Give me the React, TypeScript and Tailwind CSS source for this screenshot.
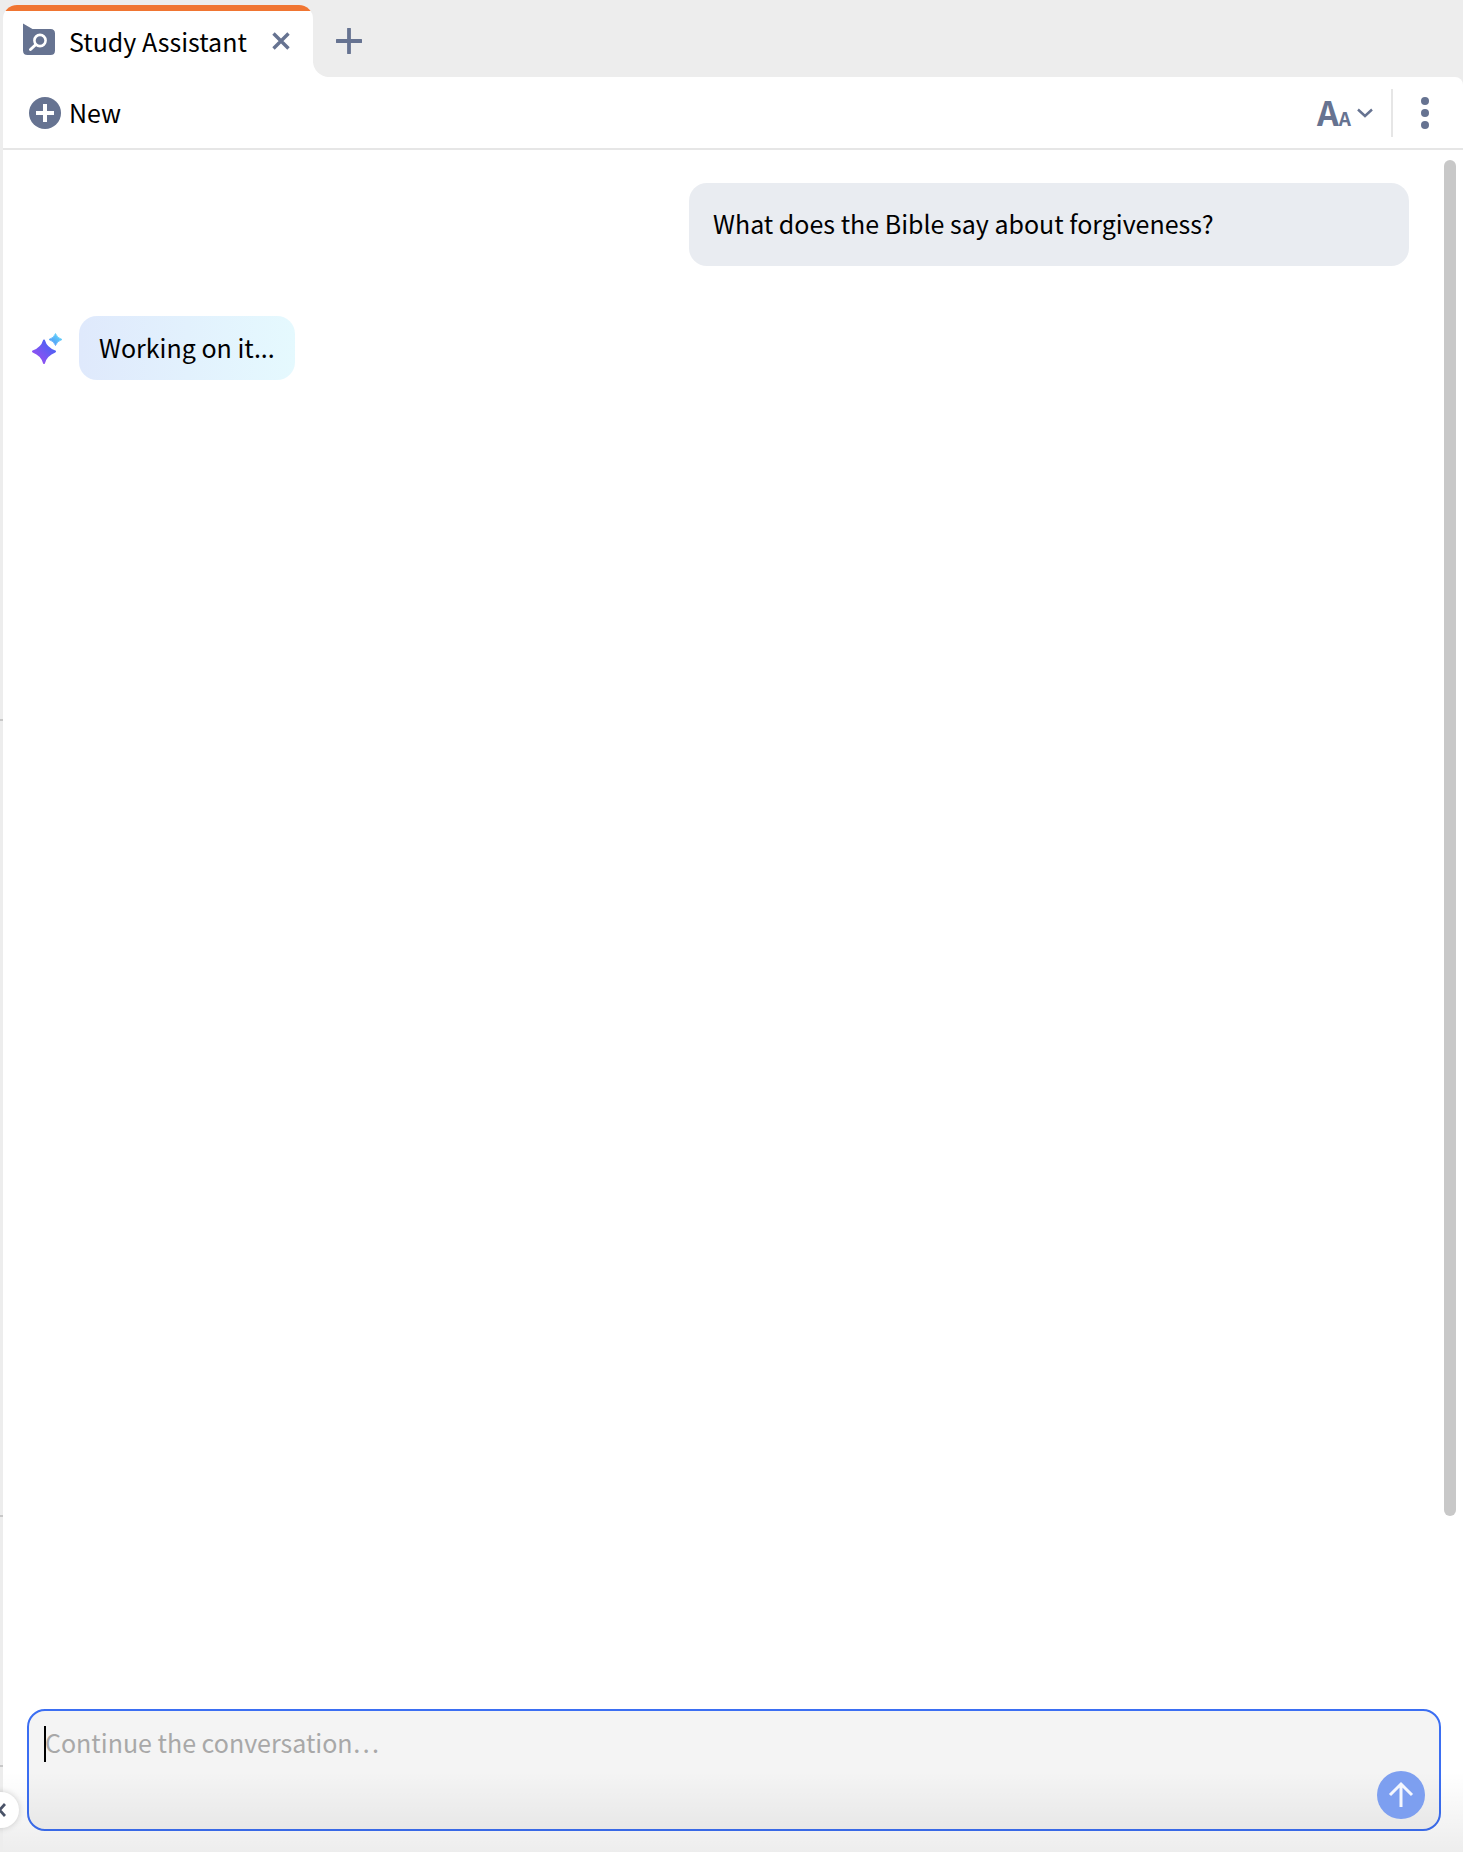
import React from "react";

const slate = "#667391";

function TabIcon() {
  return (
    <svg width="33" height="33" viewBox="0 0 33 33" className="mb-[3px] shrink-0">
      <path d="M0 0.5 L9.5 6 H27.5 Q32 6 32 10.5 V27.5 Q32 32 27.5 32 H4.5 Q0 32 0 27.5 Z" fill={slate} />
      <circle cx="17" cy="17.5" r="5.6" fill="none" stroke="#fff" strokeWidth="2.6" />
      <path d="M12.3 22 L7.5 26.5" stroke="#fff" strokeWidth="3" strokeLinecap="round" />
    </svg>
  );
}

function Sparkle() {
  return (
    <svg width="31" height="31" viewBox="0 0 31 31" className="shrink-0">
      <defs>
        <linearGradient id="big" x1="0" y1="1" x2="1" y2="0">
          <stop offset="0" stopColor="#a44cf0" />
          <stop offset="1" stopColor="#3a66f5" />
        </linearGradient>
        <linearGradient id="small" x1="0" y1="1" x2="1" y2="0">
          <stop offset="0" stopColor="#4f8ef7" />
          <stop offset="1" stopColor="#63e0fb" />
        </linearGradient>
      </defs>
      <path d="M12 7.5 Q14 15 23 18.5 Q14 22 12 30 Q10 22 1 18.5 Q10 15 12 7.5 Z" fill="url(#big)" stroke="url(#big)" strokeWidth="2" strokeLinejoin="round" />
      <path d="M23.5 0.5 Q24.8 4.8 30 6.5 Q24.8 8.2 23.5 12.5 Q22.2 8.2 17 6.5 Q22.2 4.8 23.5 0.5 Z" fill="url(#small)" stroke="url(#small)" strokeWidth="0.8" strokeLinejoin="round" />
    </svg>
  );
}

export default function App() {
  return (
    <div
      className="relative flex h-[1852px] w-[1463px] flex-col overflow-hidden bg-[#ededed] pl-[3px] text-black"
      style={{ fontFamily: '"Noto Sans CJK SC", "Noto Sans", sans-serif' }}
    >
      {/* Tab strip */}
      <div className="flex h-[77px] shrink-0 pt-[5px]">
        <div className="relative flex w-[310px] items-center overflow-hidden rounded-t-[14px] bg-white pl-[20px]">
          <div className="absolute inset-x-0 top-0 h-[6px] bg-[#f07532]" />
          <TabIcon />
          <span className="ml-[13px] mt-[1px] text-[25px] leading-none">Study Assistant</span>
          <svg width="20" height="20" viewBox="0 0 20 20" className="ml-[24px]">
            <path d="M2.5 2.5 L17.5 17.5 M17.5 2.5 L2.5 17.5" stroke={slate} strokeWidth="3.4" />
          </svg>
        </div>
        <div className="relative flex flex-1 items-center">
          <div className="absolute bottom-0 left-0 h-[14px] w-[14px] bg-white" />
          <div className="absolute inset-0 rounded-bl-[16px] bg-[#ededed]" />
          <svg width="26" height="26" viewBox="0 0 26 26" className="relative ml-[23px]">
            <path d="M13 1 V25 M1 13 H25" stroke={slate} strokeWidth="3.8" strokeLinecap="round" />
          </svg>
        </div>
      </div>

      {/* Panel */}
      <div className="relative flex min-h-0 flex-1 flex-col rounded-tr-[8px] bg-white">
        {/* Toolbar */}
        <div className="flex h-[73px] shrink-0 items-center border-b-2 border-[#e6e6e6] pl-[26px]">
          <svg width="32" height="32" viewBox="0 0 32 32">
            <circle cx="16" cy="16" r="16" fill={slate} />
            <path d="M16 7 V25 M7 16 H25" stroke="#fff" strokeWidth="4" />
          </svg>
          <span className="ml-[8px] text-[25px] leading-none">New</span>
          <div className="ml-auto flex items-center">
            <span className="mb-[2px] flex items-baseline font-bold leading-none text-[#667391]">
              <span className="text-[34px]">A</span>
              <span className="text-[19px]">A</span>
            </span>
            <svg width="16" height="10" viewBox="0 0 16 10" className="ml-[6px]">
              <path d="M1 1.5 L8 8 L15 1.5" fill="none" stroke={slate} strokeWidth="2.4" />
            </svg>
            <div className="ml-[18px] h-[48px] w-[2px] bg-[#e6e6e6]" />
            <div className="ml-[28px] mr-[34px] flex flex-col gap-[4px]">
              <div className="h-[8px] w-[8px] rounded-full bg-[#667391]" />
              <div className="h-[8px] w-[8px] rounded-full bg-[#667391]" />
              <div className="h-[8px] w-[8px] rounded-full bg-[#667391]" />
            </div>
          </div>
        </div>

        {/* Conversation */}
        <div className="relative flex min-h-0 flex-1 flex-col">
          <div className="absolute right-[7px] top-[10px] h-[1356px] w-[12px] rounded-full bg-[#c8c8c8]" />
          <div className="flex justify-end pr-[54px] pt-[33px]">
            <div className="flex h-[83px] w-[720px] items-center rounded-[18px] bg-[#e9ecf1] pb-[2px] pl-[24px] text-[25px] leading-none">
              What does the Bible say about forgiveness?
            </div>
          </div>
          <div className="mt-[50px] flex items-center pl-[29px]">
            <Sparkle />
            <div className="ml-[16px] flex h-[64px] w-[216px] items-center rounded-[18px] bg-gradient-to-r from-[#dfe9fc] to-[#e5f9fe] pb-[2px] pl-[20px] text-[25px] leading-none">
              Working on it...
            </div>
          </div>
        </div>

        {/* Composer */}
        <div className="relative mb-[21px] ml-[24px] mr-[22px] h-[122px] shrink-0 rounded-[18px] border-2 border-[#3b6ef2] bg-[#f4f4f4]">
          <div className="absolute left-[15px] top-[15px] h-[36px] w-[2px] bg-black" />
          <div className="pl-[16px] pt-[13px] text-[25px] leading-[36px] text-[#a8a8a8]">Continue the conversation…</div>
          <div className="absolute bottom-[10px] right-[14px] z-10 flex h-[48px] w-[48px] items-center justify-center rounded-full bg-[#7d9ff0]">
            <svg width="26" height="28" viewBox="0 0 26 28">
              <path d="M13 26 V3 M2 14 L13 3 L24 14" fill="none" stroke="#f4f7fe" strokeWidth="3" />
            </svg>
          </div>
        </div>

        {/* Bottom fade */}
        <div className="pointer-events-none absolute inset-x-0 bottom-0 h-[80px] bg-gradient-to-b from-[#00000000] to-[#00000012]" />
      </div>

      {/* Left strip ticks */}
      <div className="absolute left-0 top-[719px] h-[2px] w-[3px] bg-[#c8c8c8]" />
      <div className="absolute left-0 top-[1515px] h-[2px] w-[3px] bg-[#c8c8c8]" />
      <div className="absolute left-0 top-[1765px] h-[2px] w-[3px] bg-[#c8c8c8]" />

      {/* Sidebar collapse handle */}
      <div className="absolute bottom-[24px] left-[-18px] flex h-[36px] w-[37px] items-center justify-end rounded-full bg-white pr-[13px] shadow-[0_0_6px_rgba(0,0,0,0.18)]">
        <svg width="8" height="14" viewBox="0 0 8 14">
          <path d="M7 1 L1.5 7 L7 13" fill="none" stroke="#4a5368" strokeWidth="2.8" />
        </svg>
      </div>
    </div>
  );
}
